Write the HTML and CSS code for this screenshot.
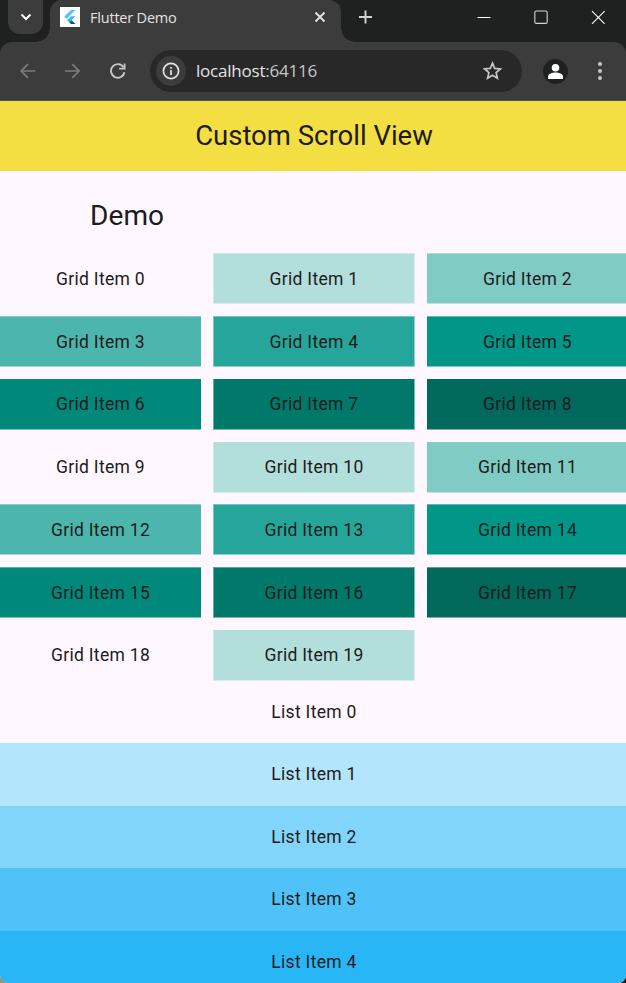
FILE: index.html
```html
<!DOCTYPE html>
<html lang="en">
<head>
<meta charset="utf-8">
<title>Flutter Demo</title>
<link rel="stylesheet" href="styles.css">
</head>
<body>
<div class="window">
  <header class="tabs">
    <button class="tab-search" aria-label="Search tabs"><svg width="12" height="8" viewBox="0 0 12 8"><path d="M1.500 1.500 6 6l4.500-4.500" fill="none" stroke="#fff" stroke-width="2"/></svg></button>
    <div class="tab">
      <svg class="favicon" width="20" height="20" viewBox="0 0 20 20"><path fill="#fff" d="M0 0h20v20H0z"/><path fill="#54c5f8" d="M11 3h4.500L6.500 12l-2.300-2.200z"/><path fill="#41b9ef" d="M11 9.200h4.500l-4 4-2.300-2.200z"/><path fill="#29b6f6" d="m7 13.200 2.300-2.300 2.300 2.300-2.300 2.300z"/><path fill="#01579b" d="m9.300 15.500 2.300-2.300 3.900 3.900H11z"/></svg>
      <span class="tab-title">Flutter Demo</span>
      <svg class="tab-close" width="12" height="12" viewBox="0 0 12 12"><path d="m1.500 1.500 9 9m0-9-9 9" stroke="#e5e5e5" stroke-width="1.800"/></svg>
    </div>
    <svg class="new-tab" width="14" height="14" viewBox="0 0 14 14"><path d="M7.500 .5v13M1 7h13" stroke="#d3d4d3" stroke-width="1.900"/></svg>
    <div class="controls">
      <svg width="14" height="14" viewBox="0 0 14 14"><path d="M.5 7.500h13" stroke="#fff"/></svg>
      <svg width="14" height="14" viewBox="0 0 14 14"><rect x=".8" y="1" width="12.400" height="12.400" rx="1.500" fill="none" stroke="#d2d3d2" stroke-width="1.100"/></svg>
      <svg width="14" height="14" viewBox="0 0 14 14"><path d="m1 1.200 12.600 12.600m0-12.600L1 13.800" stroke="#fff" stroke-width="1.100"/></svg>
    </div>
  </header>
  <nav class="toolbar">
    <svg class="nav" width="16" height="16" viewBox="0 0 16 16"><path d="M15.300 8H1.500M8 1.200 1.200 8 8 14.800" fill="none" stroke="#7c7c7c" stroke-width="1.700"/></svg>
    <svg class="nav" width="16" height="16" viewBox="0 0 16 16"><path d="M0 8h13.800M7.300 1.200 14.100 8l-6.800 6.800" fill="none" stroke="#7c7c7c" stroke-width="1.700"/></svg>
    <svg class="nav" width="16" height="16" viewBox="0 0 16 16"><path d="M14.500 9.200A6.800 6.800 0 1 1 13.500 4.200" fill="none" stroke="#c7c7c7" stroke-width="1.900"/><path d="M15.500.5v6H9.200V4.700h4.500V.5z" fill="#c7c7c7"/></svg>
    <div class="address">
      <span class="info"><svg width="18" height="18" viewBox="0 0 18 18"><circle cx="9" cy="9" r="7.600" fill="none" stroke="#e3e3e3" stroke-width="1.700"/><path d="M9 8v5M9 4.900v1.900" stroke="#e3e3e3" stroke-width="1.700"/></svg></span>
      <span class="url">localhost<span class="port">:64116</span></span>
      <svg class="star" width="20" height="20" viewBox="0 0 20 20"><path d="m10.500 2.200 2.200 5.200 5.700.5-4.300 3.700 1.300 5.600-4.900-3-4.900 3 1.300-5.600-4.300-3.700 5.700-.5z" fill="none" stroke="#c7c7c7" stroke-width="1.700"/></svg>
    </div>
    <svg class="profile" width="25" height="25" viewBox="0 0 25 25"><circle cx="12.500" cy="12.500" r="12.500" fill="#1f2120"/><circle cx="12.500" cy="8.800" r="3.800" fill="#fff"/><path d="M5 20v-2.200c0-3.100 4.500-4.300 7.500-4.300s7.500 1.200 7.500 4.300V20z" fill="#fff"/></svg>
    <svg class="more" width="4" height="18" viewBox="0 0 4 18"><g fill="#c7c7c7"><circle cx="2" cy="2" r="2"/><circle cx="2" cy="9" r="2"/><circle cx="2" cy="16" r="2"/></g></svg>
  </nav>
  <main class="page">
    <h1 class="app-bar">Custom Scroll View</h1>
    <h2 class="section-title">Demo</h2>
    <div class="grid">
      <div class="cell t0 soft">Grid Item 0</div><div class="cell t1 soft">Grid Item 1</div><div class="cell t2 soft">Grid Item 2</div>
      <div class="cell t3 soft">Grid Item 3</div><div class="cell t4 soft">Grid Item 4</div><div class="cell t5 soft">Grid Item 5</div>
      <div class="cell t6">Grid Item 6</div><div class="cell t7">Grid Item 7</div><div class="cell t8">Grid Item 8</div>
      <div class="cell t0">Grid Item 9</div><div class="cell t1">Grid Item 10</div><div class="cell t2">Grid Item 11</div>
      <div class="cell t3 soft">Grid Item 12</div><div class="cell t4 soft">Grid Item 13</div><div class="cell t5 soft">Grid Item 14</div>
      <div class="cell t6 soft">Grid Item 15</div><div class="cell t7 soft">Grid Item 16</div><div class="cell t8 soft">Grid Item 17</div>
      <div class="cell t0">Grid Item 18</div><div class="cell t1">Grid Item 19</div>
    </div>
    <div class="list">
      <div class="row">List Item 0</div>
      <div class="row b1">List Item 1</div>
      <div class="row b2">List Item 2</div>
      <div class="row b3">List Item 3</div>
      <div class="row b4">List Item 4</div>
    </div>
  </main>
</div>
</body>
</html>
```
FILE: styles.css
```css
* { box-sizing: border-box; }
html { height: 983px; overflow: hidden; background: linear-gradient(90deg, #b3924a 50%, #1b1b1b 50%); }
body { margin: 0; height: 983px; overflow: hidden; }
svg { display: block; flex: none; }
.window { width: 626px; height: 983px; overflow: hidden; border-radius: 0 0 8px 8px; background: #1f2120; }

.tabs { display: flex; height: 42px; font-family: "Open Sans", sans-serif; }
.tab-search { display: flex; align-items: center; justify-content: center; width: 35px; height: 34px; margin: 0 0 0 8px; padding: 0; border: 0; border-radius: 0 0 12px 12px; background: #3c3c3c; }
.tab { position: relative; display: flex; width: 291px; height: 42px; margin-left: 7px; padding: 7px 15px 0 10px; border-radius: 12px 12px 0 0; background: #3c3c3c; }
.tab::before, .tab::after { content: ""; position: absolute; bottom: 0; width: 14px; height: 14px; }
.tab::before { left: -14px; background: radial-gradient(circle at 0 0, transparent 13.500px, #3c3c3c 14px); }
.tab::after { right: -14px; background: radial-gradient(circle at 100% 0, transparent 13.500px, #3c3c3c 14px); }
.tab-title { margin-left: 10px; font-size: 14.500px; line-height: 22px; letter-spacing: -.2px; color: #e3e3e3; white-space: nowrap; }
.tab-close { margin: 4px 0 0 auto; }
.new-tab { margin: 10px 0 0 17px; }
.controls { display: flex; gap: 43px; margin: 10px 21px 0 auto; }

.toolbar { display: flex; align-items: center; height: 59px; padding: 0 24px 0 20px; border-radius: 12px 12px 0 0; background: #3c3c3c; border-bottom: 1px solid #505050; }
.nav { margin-right: 29px; }
.address { display: flex; align-items: center; width: 372px; height: 42px; margin-left: -5px; padding: 0 20px 0 6px; border-radius: 21px; background: #282828; }
.info { display: flex; align-items: center; justify-content: center; width: 30px; height: 30px; border-radius: 50%; background: #3c3c3c; }
.url { margin-left: 10px; font: 17px/24px "Open Sans", sans-serif; letter-spacing: -.22px; color: #e3e3e3; }
.port { color: #c7c7c7; }
.star { margin-left: auto; }
.profile { margin-left: 21px; }
.more { margin-left: auto; }

.page { width: 628px; height: 882px; background: #fef7ff; color: #1d1b20; font-family: Roboto, sans-serif; }
.app-bar, .section-title { margin: 0; font-size: 27.500px; font-weight: 400; }
.app-bar { height: 70px; line-height: 70px; text-align: center; background: #f4df42; }
.section-title { height: 82.300px; padding-left: 90px; line-height: 89px; font-size: 28px; letter-spacing: .1px; }
.grid { display: grid; grid-template-columns: 201px 202px 201px; grid-auto-rows: 51px; gap: 11.750px 12px; }
.cell { --tone: #fef7ff; display: flex; align-items: center; justify-content: center; border-bottom: 1px solid color-mix(in srgb, var(--tone) 50%, #fef7ff); background: var(--tone) padding-box; font-size: 17.500px; letter-spacing: .31px; }
.cell:nth-child(3n+2) { border-left: 1px solid color-mix(in srgb, var(--tone) 60%, #fef7ff); border-right: 1px solid color-mix(in srgb, var(--tone) 50%, #fef7ff); }
.cell.soft { border-top: 1px solid color-mix(in srgb, var(--tone) 65%, #fef7ff); }
.t1 { --tone: #b2dfdb; }
.t2 { --tone: #80cbc4; }
.t3 { --tone: #4db6ac; }
.t4 { --tone: #26a69a; }
.t5 { --tone: #009688; }
.t6 { --tone: #00897b; }
.t7 { --tone: #00796b; }
.t8 { --tone: #00695c; }
.list { margin-top: -.4px; }
.row { display: flex; align-items: center; justify-content: center; height: 62.600px; font-size: 17.500px; letter-spacing: .31px; }
.b1 { background: #b3e5fc; }
.b2 { background: #81d4fa; }
.b3 { background: #4fc3f7; }
.b4 { background: #29b6f6; }
```
